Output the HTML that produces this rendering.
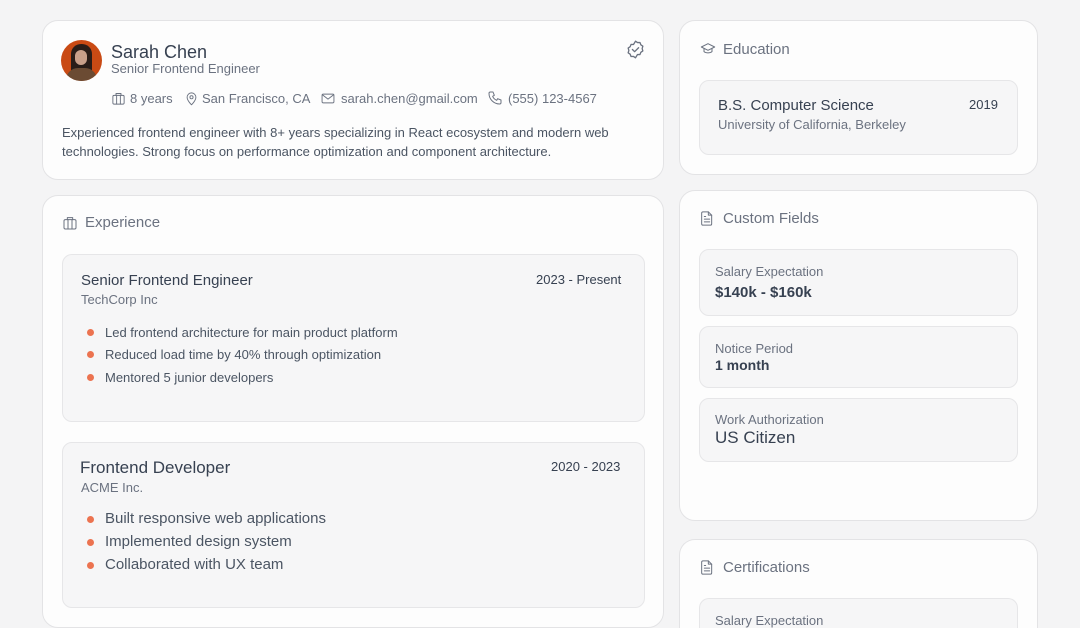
<!DOCTYPE html>
<html style="overflow:hidden;height:628px"><head><meta charset="utf-8"><style>
*{box-sizing:border-box;margin:0;padding:0}
body{width:1080px;height:628px;overflow:hidden;background:#f4f4f5;font-family:"Liberation Sans",sans-serif;color:#374151;position:relative}
.card{position:absolute;background:#fdfdfd;border:1px solid #e3e3e5;border-radius:16px}
.box{position:absolute;background:#f6f6f7;border:1px solid #e6e6e8;border-radius:10px}
.t{position:absolute;white-space:nowrap}
.g{color:#6b7280}
.dot{position:absolute;width:7px;height:7px;border-radius:50%;background:#ec7350}
svg{position:absolute;fill:none;stroke:#6b7280;stroke-width:1.5;stroke-linecap:round;stroke-linejoin:round}
</style></head><body>
<div class="card" style="left:42px;top:20px;width:622px;height:160px"></div>
<div style="position:absolute;left:61px;top:40px;width:41px;height:41px;border-radius:50%;background:#c94a14;overflow:hidden">
<div style="position:absolute;left:10px;top:4px;width:21px;height:30px;border-radius:10px 10px 4px 4px;background:#2a1d18"></div>
<div style="position:absolute;left:14px;top:10px;width:12px;height:15px;border-radius:6px;background:#c9a08a"></div>
<div style="position:absolute;left:5px;top:28px;width:31px;height:20px;border-radius:12px 12px 0 0;background:#6b4b33"></div>
</div>
<div class="t" style="left:111px;top:42px;font-size:18px;color:#374151">Sarah Chen</div>
<div class="t g" style="left:111px;top:61px;font-size:13px">Senior Frontend Engineer</div>
<svg style="left:625px;top:39px" width="21" height="21" viewBox="0 0 24 24"><path d="M12 2.5l2.3 1.6 2.8-.1 1 2.6 2.3 1.6-.8 2.7.8 2.7-2.3 1.6-1 2.6-2.8-.1L12 21.5l-2.3-1.6-2.8.1-1-2.6-2.3-1.6.8-2.7-.8-2.7 2.3-1.6 1-2.6 2.8.1z"/><path d="M8.5 12l2.5 2.5 4.5-4.5"/></svg>
<svg style="left:111px;top:91px" width="15" height="15" viewBox="0 0 24 24"><rect x="3" y="7" width="18" height="14" rx="2"/><path d="M8 7V4h8v3M9 7v14M15 7v14"/></svg>
<div class="t g" style="left:130px;top:91px;font-size:13px">8 years</div>
<svg style="left:184px;top:91px" width="15" height="15" viewBox="0 0 24 24"><path d="M12 22s7-6.5 7-12a7 7 0 0 0-14 0c0 5.5 7 12 7 12z"/><circle cx="12" cy="10" r="2.5"/></svg>
<div class="t g" style="left:202px;top:91px;font-size:13px">San Francisco, CA</div>
<svg style="left:320px;top:91px" width="16" height="15" viewBox="0 0 24 24"><rect x="2.5" y="5" width="19" height="14" rx="2"/><path d="M3 6l9 7 9-7"/></svg>
<div class="t g" style="left:341px;top:91px;font-size:13px">sarah.chen@gmail.com</div>
<svg style="left:487px;top:90px" width="16" height="16" viewBox="0 0 24 24"><path d="M5 3h4l2 5-2.5 1.5a11 11 0 0 0 6 6L16 13l5 2v4a2 2 0 0 1-2 2A16 16 0 0 1 3 5a2 2 0 0 1 2-2z"/></svg>
<div class="t g" style="left:508px;top:91px;font-size:13px">(555) 123-4567</div>
<div class="t" style="left:62px;top:123px;font-size:13px;line-height:19px;color:#4b5563;white-space:normal;width:590px">Experienced frontend engineer with 8+ years specializing in React ecosystem and modern web technologies. Strong focus on performance optimization and component architecture.</div>

<div class="card" style="left:42px;top:195px;width:622px;height:433px"></div>
<svg style="left:62px;top:215px" width="16" height="16" viewBox="0 0 24 24"><rect x="3" y="7" width="18" height="14" rx="2"/><path d="M8 7V4h8v3M9 7v14M15 7v14"/></svg>
<div class="t g" style="left:85px;top:214px;font-size:15px">Experience</div>
<div class="box" style="left:62px;top:254px;width:583px;height:168px"></div>
<div class="t" style="left:81px;top:272px;font-size:15px">Senior Frontend Engineer</div>
<div class="t g" style="left:81px;top:292px;font-size:13px">TechCorp Inc</div>
<div class="t" style="left:536px;top:272px;font-size:13px">2023 - Present</div>
<div class="dot" style="left:87px;top:329px"></div><div class="t" style="left:105px;top:325px;font-size:13px;color:#4b5563">Led frontend architecture for main product platform</div>
<div class="dot" style="left:87px;top:351px"></div><div class="t" style="left:105px;top:347px;font-size:13px;color:#4b5563">Reduced load time by 40% through optimization</div>
<div class="dot" style="left:87px;top:374px"></div><div class="t" style="left:105px;top:370px;font-size:13px;color:#4b5563">Mentored 5 junior developers</div>
<div class="box" style="left:62px;top:442px;width:583px;height:166px"></div>
<div class="t" style="left:80px;top:458px;font-size:17px">Frontend Developer</div>
<div class="t g" style="left:81px;top:480px;font-size:13px">ACME Inc.</div>
<div class="t" style="left:551px;top:459px;font-size:13px">2020 - 2023</div>
<div class="dot" style="left:87px;top:516px"></div><div class="t" style="left:105px;top:510px;font-size:15px;color:#4b5563">Built responsive web applications</div>
<div class="dot" style="left:87px;top:539px"></div><div class="t" style="left:105px;top:533px;font-size:15px;color:#4b5563">Implemented design system</div>
<div class="dot" style="left:87px;top:562px"></div><div class="t" style="left:105px;top:556px;font-size:15px;color:#4b5563">Collaborated with UX team</div>

<div class="card" style="left:679px;top:20px;width:359px;height:155px"></div>
<svg style="left:699px;top:41px" width="18" height="16" viewBox="0 0 24 24"><path d="M2 9l10-5 10 5-10 5z"/><path d="M6 11v5c3 2.5 9 2.5 12 0v-5"/></svg>
<div class="t g" style="left:723px;top:41px;font-size:15px">Education</div>
<div class="box" style="left:699px;top:80px;width:319px;height:75px"></div>
<div class="t" style="left:718px;top:97px;font-size:15px">B.S. Computer Science</div>
<div class="t g" style="left:718px;top:117px;font-size:13px">University of California, Berkeley</div>
<div class="t" style="left:969px;top:97px;font-size:13px">2019</div>

<div class="card" style="left:679px;top:190px;width:359px;height:331px"></div>
<svg style="left:699px;top:210px" width="16" height="17" viewBox="0 0 24 24"><path d="M6 2h8l5 5v13a2 2 0 0 1-2 2H6a2 2 0 0 1-2-2V4a2 2 0 0 1 2-2z"/><path d="M14 2v5h5M8 13h8M8 17h8M8 9h2"/></svg>
<div class="t g" style="left:723px;top:210px;font-size:15px">Custom Fields</div>
<div class="box" style="left:699px;top:249px;width:319px;height:67px"></div>
<div class="t g" style="left:715px;top:264px;font-size:13px">Salary Expectation</div>
<div class="t" style="left:715px;top:284px;font-size:15px;font-weight:bold">$140k - $160k</div>
<div class="box" style="left:699px;top:326px;width:319px;height:62px"></div>
<div class="t g" style="left:715px;top:341px;font-size:13px">Notice Period</div>
<div class="t" style="left:715px;top:357px;font-size:14px;font-weight:bold">1 month</div>
<div class="box" style="left:699px;top:398px;width:319px;height:64px"></div>
<div class="t g" style="left:715px;top:412px;font-size:13px">Work Authorization</div>
<div class="t" style="left:715px;top:428px;font-size:17px">US Citizen</div>

<div class="card" style="left:679px;top:539px;width:359px;height:89px;border-bottom-left-radius:0;border-bottom-right-radius:0;border-bottom:none"></div>
<svg style="left:699px;top:559px" width="16" height="17" viewBox="0 0 24 24"><path d="M6 2h8l5 5v13a2 2 0 0 1-2 2H6a2 2 0 0 1-2-2V4a2 2 0 0 1 2-2z"/><path d="M14 2v5h5M8 13h8M8 17h8M8 9h2"/></svg>
<div class="t g" style="left:723px;top:559px;font-size:15px">Certifications</div>
<div class="box" style="left:699px;top:598px;width:319px;height:30px;border-bottom:none;border-bottom-left-radius:0;border-bottom-right-radius:0"></div>
<div class="t g" style="left:715px;top:613px;font-size:13px">Salary Expectation</div>
</body></html>
